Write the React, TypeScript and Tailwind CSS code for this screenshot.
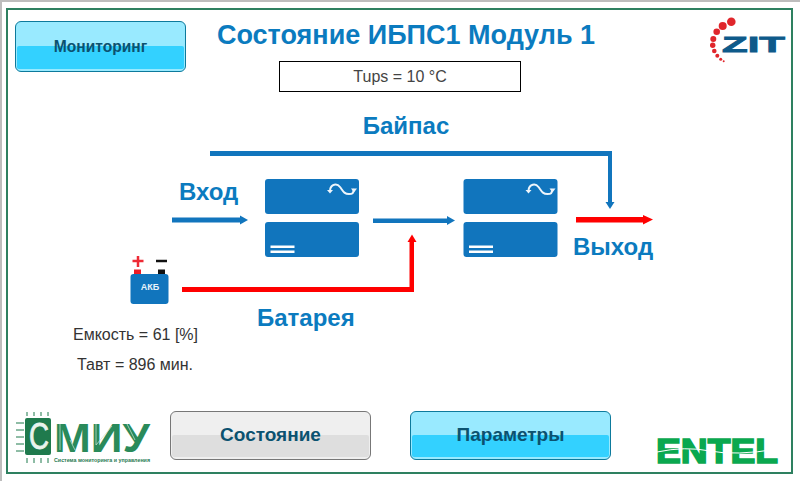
const BLUE = "#1175bd";

const GlossButton = ({
  label,
  gray,
  className,
}: {
  label: string;
  gray?: boolean;
  className: string;
}) => (
  <button
    className={`relative shrink-0 rounded-[6px] border font-bold text-[#0b5270] ${
      gray ? "border-[#777777] bg-[#efefef]" : "border-[#0d7a9c] bg-[#99eaff]"
    } ${className}`}
  >
    <span
      className={`absolute bottom-[2px] left-[1px] right-[1px] h-[47%] rounded-[2px] ${
        gray ? "bg-[#dedede]" : "bg-[#33d1ff]"
      }`}
    />
    <span className="relative">{label}</span>
  </button>
);

const UpsBlock = ({ x }: { x: number }) => (
  <g transform={`translate(${x} 179)`}>
    <rect x="0" y="0" width="94" height="35" rx="3" fill={BLUE} />
    <path
      d="M65 11 C66 5 72 4 75 8 S79 15 84 15 S88 13 89 10"
      fill="none"
      stroke="#eef5fb"
      strokeWidth="2"
    />
    <path d="M62 11 L68 11 L65 14.5 Z M86 9.5 L92 9.5 L89 13.5 Z" fill="#eef5fb" />
    <rect x="0" y="43" width="94" height="35" rx="3" fill={BLUE} />
    <rect x="5.5" y="66.5" width="24" height="2.5" fill="#ffffff" />
    <rect x="5.5" y="71.5" width="24" height="2.5" fill="#ffffff" />
  </g>
);

const ZitLogo = () => (
  <svg width="80" height="56" viewBox="708 14 80 56" className="shrink-0">
    <g fill="#e0262c">
      <circle cx="731.3" cy="21.7" r="4.3" />
      <circle cx="722.7" cy="26" r="4" />
      <circle cx="716.7" cy="31.7" r="3.3" />
      <circle cx="713.3" cy="39" r="3" />
      <circle cx="712.7" cy="45.3" r="2.7" />
      <circle cx="714.3" cy="51" r="2.3" />
      <circle cx="717.3" cy="55.7" r="2" />
      <circle cx="720.7" cy="59.3" r="1.5" />
      <circle cx="723.7" cy="61.3" r="1" />
    </g>
    <text
      x="722"
      y="51.5"
      fontSize="21.5"
      fontWeight="700"
      fill="#0e5a8a"
      stroke="#0e5a8a"
      strokeWidth="0.8"
      textLength="63"
      lengthAdjust="spacingAndGlyphs"
      fontFamily="Liberation Sans, sans-serif"
    >
      ZIT
    </text>
  </svg>
);

const SmiuLogo = () => (
  <svg width="150" height="67" viewBox="14 405 150 67" className="ml-[6px] shrink-0">
    <g stroke="#1f7a4d" strokeWidth="1">
      {[27, 34, 41, 48].map((x) => (
        <g key={x}>
          <line x1={x} y1="412" x2={x} y2="416" />
          <line x1={x} y1="458" x2={x} y2="463" />
        </g>
      ))}
      {[423, 430, 437, 444, 451].map((y) => (
        <line key={y} x1="16" y1={y} x2="24" y2={y} />
      ))}
    </g>
    <rect x="25" y="418" width="26" height="37" rx="2" fill="#1f7a4d" />
    <text
      x="29"
      y="449"
      fontSize="36"
      fill="#e9f3ed"
      stroke="#e9f3ed"
      strokeWidth="0.8"
      textLength="20"
      lengthAdjust="spacingAndGlyphs"
      fontFamily="Liberation Sans, sans-serif"
    >
      С
    </text>
    <text
      x="54"
      y="452"
      fontSize="41"
      fontWeight="700"
      fill="#2a8a5a"
      textLength="96"
      lengthAdjust="spacingAndGlyphs"
      fontFamily="Liberation Sans, sans-serif"
    >
      МИУ
    </text>
    <path
      d="M60 424 L60 450 M70 440 L75 450 M96 424 L96 445 L112 426 M127 424 L135 440"
      stroke="#cfe6d9"
      strokeWidth="0.7"
      fill="none"
    />
    <text
      x="54"
      y="462"
      fontSize="6"
      fontWeight="700"
      fill="#2a7a52"
      textLength="96"
      lengthAdjust="spacingAndGlyphs"
      fontFamily="Liberation Sans, sans-serif"
    >
      Система мониторинга и управления
    </text>
  </svg>
);

const EntelLogo = () => (
  <svg width="128" height="45" viewBox="654 425 128 45" className="ml-[43px] mt-[20px] shrink-0">
    <text
      x="656"
      y="462.5"
      fontSize="35"
      fontWeight="700"
      fill="#0aa84f"
      stroke="#0aa84f"
      strokeWidth="1.6"
      textLength="122"
      lengthAdjust="spacingAndGlyphs"
      fontFamily="Liberation Sans, sans-serif"
    >
      ENTEL
    </text>
    <path d="M657 452 Q685 446 710 451 T778 449" stroke="#ffffff" strokeWidth="1" fill="none" />
  </svg>
);

const Diagram = () => (
  <div className="relative h-[313px] shrink-0">
    <svg width="784" height="313" viewBox="8 92 784 313" className="absolute left-0 top-0">
      {/* байпас */}
      <rect x="210" y="151" width="402" height="5" fill={BLUE} />
      <rect x="608" y="151" width="4" height="52" fill={BLUE} />
      <path d="M605.5 202 H614.5 L610 209 Z" fill={BLUE} />
      {/* вход */}
      <rect x="172" y="217.5" width="70" height="5" fill={BLUE} />
      <path d="M240 215.5 L248 220 L240 224.5 Z" fill={BLUE} />
      <UpsBlock x={265} />
      <UpsBlock x={463.5} />
      {/* между блоками */}
      <rect x="373" y="218.5" width="76" height="4.5" fill={BLUE} />
      <path d="M447 216 L455 220.5 L447 225 Z" fill={BLUE} />
      {/* батарея */}
      <rect x="182" y="287" width="232" height="5" fill="#ff0000" />
      <rect x="409.5" y="240" width="4.5" height="52" fill="#ff0000" />
      <path d="M407.5 242 L412 234.5 L416.5 242 Z" fill="#ff0000" />
      {/* выход */}
      <rect x="576" y="217" width="68" height="5.5" fill="#ff0000" />
      <path d="M643 215 L653 219.5 L643 224.5 Z" fill="#ff0000" />
      {/* АКБ */}
      <path d="M132.5 261 H143.5 M138 256 V267" stroke="#ee2a35" strokeWidth="2.5" />
      <path d="M156 261 H167" stroke="#111111" strokeWidth="2.5" />
      <rect x="134" y="269.5" width="7" height="5" fill="#ee1c25" />
      <rect x="158" y="269.5" width="7" height="5" fill="#111111" />
      <rect x="130.5" y="274" width="38" height="30" rx="3" fill={BLUE} />
    </svg>

    <span className="absolute left-[123px] top-[190px] w-[38px] text-center text-[9px] leading-[11px] font-bold text-[#e8f2fa]">
      АКБ
    </span>
    <span className="absolute left-[298px] top-[20px] w-[200px] text-center text-[24px] leading-[28px] font-bold text-[#0b7bbf]">
      Байпас
    </span>
    <span className="absolute left-[171px] top-[86px] text-[24px] leading-[28px] font-bold text-[#0b7bbf]">
      Вход
    </span>
    <span className="absolute left-[565px] top-[141px] text-[24px] leading-[28px] font-bold text-[#0b7bbf]">
      Выход
    </span>
    <span className="absolute left-[249px] top-[212px] text-[24px] leading-[28px] font-bold text-[#0b7bbf]">
      Батарея
    </span>
    <span className="absolute left-[65px] top-[234px] text-[16px] leading-[18px] text-[#333333]">
      Емкость = 61 [%]
    </span>
    <span className="absolute left-[69px] top-[264px] text-[16px] leading-[18px] text-[#333333]">
      Тавт = 896 мин.
    </span>
  </div>
);

export default function App() {
  return (
    <div
      className="h-[481px] w-[800px] overflow-hidden border-l-2 border-t-2 border-[#bdbdbd] bg-white pl-[4px] pt-[6px]"
      style={{ fontFamily: '"Liberation Sans", Arial, sans-serif' }}
    >
      <div className="flex h-[466px] w-[787px] flex-col border-2 border-[#2e8060]">
        <div className="flex h-[82px] shrink-0">
          <GlossButton
            label="Мониторинг"
            className="ml-[7px] mt-[11px] h-[51px] w-[171px] text-[15.6px]"
          />
          <div className="flex w-[440px] shrink-0 flex-col items-center pt-[9px]">
            <h1 className="text-[27px] leading-[32px] font-bold text-[#0b7bbf]">
              Состояние ИБПС1 Модуль 1
            </h1>
            <div className="mr-[12px] mt-[10px] flex h-[31px] w-[242px] items-center justify-center border border-black text-[16px] text-[#444444]">
              Tups = 10 °C
            </div>
          </div>
          <div className="ml-[82px] mt-[4px]">
            <ZitLogo />
          </div>
        </div>
        <Diagram />
        <div className="flex min-h-0 flex-1">
          <SmiuLogo />
          <GlossButton
            label="Состояние"
            gray
            className="ml-[6px] mt-[6px] h-[49px] w-[201px] text-[19px]"
          />
          <GlossButton
            label="Параметры"
            className="ml-[39px] mt-[6px] h-[49px] w-[201px] text-[19px]"
          />
          <EntelLogo />
        </div>
      </div>
    </div>
  );
}
